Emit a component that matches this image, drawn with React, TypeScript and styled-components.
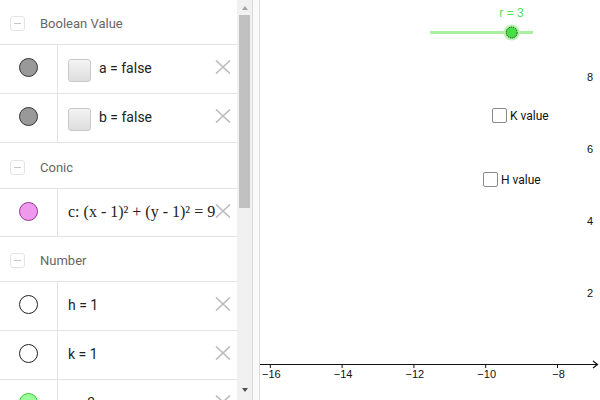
import React from "react";
import styled, { createGlobalStyle } from "styled-components";

const Global = createGlobalStyle`
  html, body { margin: 0; padding: 0; background: #fff; }
  body { font-family: Roboto, "Liberation Sans", sans-serif; }
  #root { width: 600px; height: 400px; }
`;

const Shell = styled.div`
  display: flex;
  width: 600px;
  height: 400px;
  overflow: hidden;
  background: #fff;
`;

const AlgebraList = styled.div`
  width: 237px;
  flex-shrink: 0;
  display: flex;
  flex-direction: column;
  overflow: hidden;
`;

const GroupHeader = styled.div<{ $h: number }>`
  height: ${(p) => p.$h}px;
  flex-shrink: 0;
  box-sizing: border-box;
  border-bottom: 1px solid #e3e3e3;
  display: flex;
  align-items: center;
  padding: 3px 0 0 10px;
  gap: 15px;
  font-size: 13px;
  color: #666;
`;

const CollapseBtn = styled.div`
  width: 15px;
  height: 15px;
  box-sizing: border-box;
  border: 1px solid #e4e4e4;
  border-radius: 3px;
  display: flex;
  align-items: center;
  justify-content: center;
  &::after {
    content: "";
    width: 7px;
    height: 1px;
    background: #c8c8c8;
  }
`;

const ItemRow = styled.div<{ $h: number }>`
  position: relative;
  height: ${(p) => p.$h}px;
  flex-shrink: 0;
  box-sizing: border-box;
  border-bottom: 1px solid #e3e3e3;
  display: flex;
`;

const MarbleCell = styled.div`
  width: 58px;
  flex-shrink: 0;
  box-sizing: border-box;
  border-right: 1px solid #e3e3e3;
  display: flex;
  align-items: center;
  justify-content: center;
  padding-bottom: 3px;
`;

const Marble = styled.div<{ $fill: string; $border: string }>`
  width: 19px;
  height: 19px;
  box-sizing: border-box;
  border-radius: 50%;
  background: ${(p) => p.$fill};
  border: 1px solid ${(p) => p.$border};
`;

const ItemContent = styled.div`
  flex: 1;
  display: flex;
  align-items: center;
  gap: 8px;
  padding-left: 10px;
  white-space: nowrap;
  overflow: hidden;
  font-size: 14px;
  color: #222;
`;

const BoolBox = styled.div`
  width: 23px;
  height: 23px;
  box-sizing: border-box;
  border: 1px solid #c9c9c9;
  border-radius: 3px;
  background: linear-gradient(#f3f3f3, #dedede);
  margin-top: 3px;
`;

const Label = styled.span`
  margin-top: -2px;
`;

const MathLabel = styled.span`
  font-family: "Liberation Serif", serif;
  font-size: 16px;
  color: #222;
  margin-top: -1px;
`;

const DeleteBtn = styled.div`
  position: absolute;
  right: 6px;
  top: 15px;
  width: 16px;
  height: 14px;
  display: flex;
`;

const Scrollbar = styled.div`
  width: 15px;
  flex-shrink: 0;
  background: #f1f1f1;
  display: flex;
  flex-direction: column;
`;

const ScrollArrow = styled.div<{ $h: number; $down?: boolean }>`
  height: ${(p) => p.$h}px;
  display: flex;
  align-items: center;
  justify-content: center;
  &::after {
    content: "";
    border-left: 3px solid transparent;
    border-right: 3px solid transparent;
    ${(p) =>
      p.$down
        ? "border-top: 4px solid #505050;"
        : "border-bottom: 4px solid #a3a3a3;"}
  }
`;

const ScrollThumb = styled.div`
  height: 193px;
  margin: 0 2px;
  background: #c1c1c1;
`;

const ScrollSpace = styled.div`
  flex: 1;
`;

const Splitter = styled.div`
  width: 8px;
  flex-shrink: 0;
  box-sizing: border-box;
  border-left: 1px solid #dadada;
  border-right: 1px solid #dadada;
  background: #fafafa;
`;

const Graphics = styled.div`
  position: relative;
  flex: 1;
  height: 400px;
  overflow: hidden;
  background: #fff;
`;

const Canvas = styled.svg`
  position: absolute;
  left: 0;
  top: 0;
  font-family: "Liberation Sans", Arial, sans-serif;
`;

const CheckItem = styled.div<{ $x: number; $y: number }>`
  position: absolute;
  left: ${(p) => p.$x}px;
  top: ${(p) => p.$y}px;
  display: flex;
  align-items: center;
  gap: 3px;
  font-size: 12px;
  color: #111;
  white-space: nowrap;
`;

const CheckSquare = styled.div`
  width: 15px;
  height: 15px;
  box-sizing: border-box;
  border: 1.5px solid #8a8a8a;
  border-radius: 2px;
  background: #fff;
`;

const XIcon = () => (
  <svg width="16" height="14" viewBox="0 0 16 14">
    <path d="M1 0.5 L15 13.5 M15 0.5 L1 13.5" stroke="#bcbcbc" strokeWidth="1.6" fill="none" />
  </svg>
);

type Item = {
  h: number;
  fill: string;
  border: string;
  bool?: boolean;
  text?: string;
  math?: string;
};

const Group: React.FC<{ title: string; h: number; items: Item[] }> = ({ title, h, items }) => (
  <>
    <GroupHeader $h={h}>
      <CollapseBtn />
      <span>{title}</span>
    </GroupHeader>
    {items.map((it, i) => (
      <ItemRow key={i} $h={it.h}>
        <MarbleCell>
          <Marble $fill={it.fill} $border={it.border} />
        </MarbleCell>
        <ItemContent>
          {it.bool && <BoolBox />}
          {it.text && <Label>{it.text}</Label>}
          {it.math && <MathLabel>{it.math}</MathLabel>}
        </ItemContent>
        <DeleteBtn>
          <XIcon />
        </DeleteBtn>
      </ItemRow>
    ))}
  </>
);

const UNIT = 35.9;
const X0 = 10.3 + 16 * UNIT; // screen x (relative) of x=0
const Y0 = 364;
const sx = (v: number) => X0 + v * UNIT;
const sy = (v: number) => Y0 - v * UNIT;

export default function App() {
  const xTicks = [-16, -14, -12, -10, -8];
  const yTicks = [2, 4, 6, 8];
  return (
    <>
      <Global />
      <Shell>
        <AlgebraList>
          <Group
            title="Boolean Value"
            h={45}
            items={[
              { h: 49, fill: "#999", border: "#333", bool: true, text: "a = false" },
              { h: 49, fill: "#999", border: "#333", bool: true, text: "b = false" },
            ]}
          />
          <Group
            title="Conic"
            h={46}
            items={[
              { h: 48, fill: "#ee99ee", border: "#993399", math: "c: (x - 1)² + (y - 1)² = 9" },
            ]}
          />
          <Group
            title="Number"
            h={45}
            items={[
              { h: 49, fill: "#fff", border: "#222", text: "h = 1" },
              { h: 49, fill: "#fff", border: "#222", text: "k = 1" },
              { h: 49, fill: "#99ff99", border: "#33cc33", text: "r = 3" },
            ]}
          />
        </AlgebraList>
        <Scrollbar>
          <ScrollArrow $h={15} />
          <ScrollThumb />
          <ScrollSpace />
          <ScrollArrow $h={21} $down />
        </Scrollbar>
        <Splitter />
        <Graphics>
          <Canvas width="340" height="400" viewBox="0 0 340 400">
            <line x1="0" y1={Y0 + 0.5} x2="337" y2={Y0 + 0.5} stroke="#111" strokeWidth="1.2" />
            <path d={`M333 ${Y0 - 3} L337.5 ${Y0 + 0.5} L333 ${Y0 + 4}`} stroke="#111" strokeWidth="1.2" fill="none" />
            {xTicks.map((t) => (
              <g key={t}>
                <line x1={sx(t)} y1={Y0} x2={sx(t)} y2={Y0 + 4} stroke="#111" strokeWidth="1" />
                <text x={sx(t) + 1} y={Y0 + 14} fontSize="11" textAnchor="middle" fill="#111">
                  {"\u2212" + Math.abs(t)}
                </text>
              </g>
            ))}
            {yTicks.map((t) => (
              <text key={t} x="333" y={sy(t) + 4.5} fontSize="11" textAnchor="end" fill="#111">
                {t}
              </text>
            ))}
            <line x1="170" y1="32.5" x2="273" y2="32.5" stroke="#a8f0a0" strokeWidth="3" />
            <circle cx="251.7" cy="32.5" r="8" fill="#b8f4b0" />
            <circle cx="251.7" cy="32.5" r="5.5" fill="#44e044" stroke="#222" strokeWidth="1" strokeDasharray="1.2 1" />
            <text x="251.5" y="17" fontSize="12" textAnchor="middle" fill="#55e055">
              r = 3
            </text>
          </Canvas>
          <CheckItem $x={232} $y={108}>
            <CheckSquare />
            <span>K value</span>
          </CheckItem>
          <CheckItem $x={223} $y={172}>
            <CheckSquare />
            <span>H value</span>
          </CheckItem>
        </Graphics>
      </Shell>
    </>
  );
}
